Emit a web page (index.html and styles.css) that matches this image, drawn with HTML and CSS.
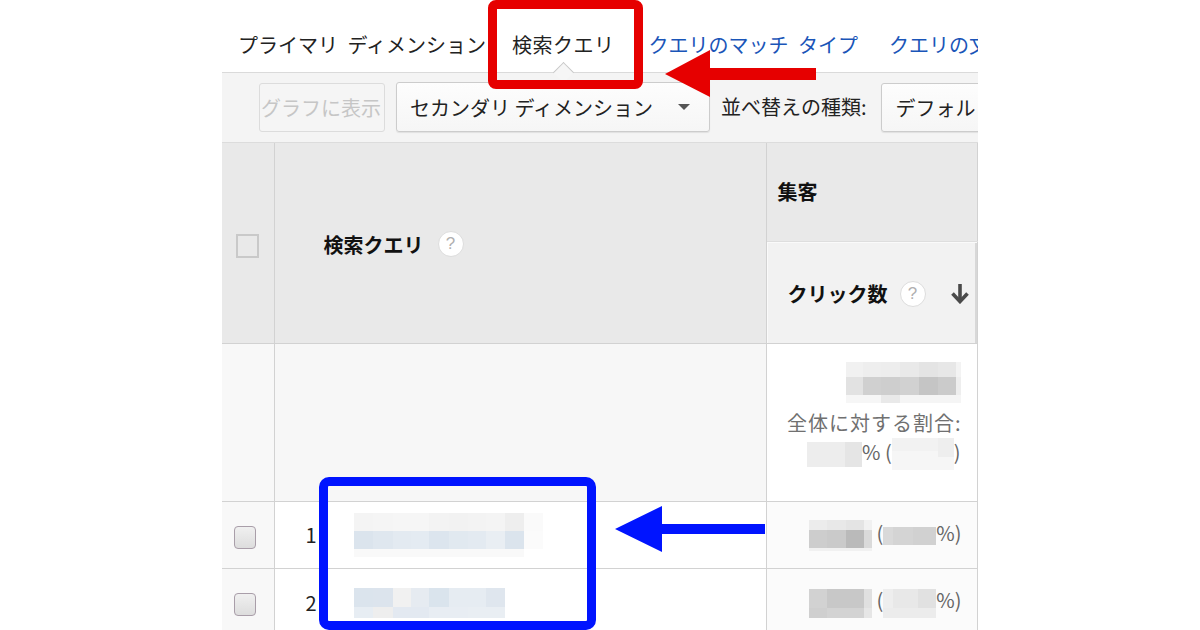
FILE: index.html
```html
<!DOCTYPE html>
<html lang="ja">
<head>
<meta charset="utf-8">
<title>検索クエリ</title>
<link rel="stylesheet" href="styles.css">
</head>
<body>
<div class="stage">
  <div class="shot">
    <nav class="tabs">
      <span class="tab-label">プライマリ ディメンション</span>
      <span class="tab active">検索クエリ</span>
      <a class="tab link">クエリのマッチ タイプ</a>
      <a class="tab link last">クエリの文字数</a>
    </nav>
    <div class="toolbar">
      <button class="btn btn-disabled">グラフに表示</button>
      <button class="btn btn-select"><span>セカンダリ ディメンション</span><span class="tri"></span></button>
      <span class="sort-label">並べ替えの種類:</span>
      <button class="btn btn-sort">デフォルト</button>
    </div>
    <table class="grid">
      <colgroup><col class="c-check"><col class="c-dim"><col class="c-metric"></colgroup>
      <thead>
        <tr class="h1">
          <th rowspan="2" class="th-check"><span class="cb-head"></span></th>
          <th rowspan="2" class="th-dim"><span class="th-text">検索クエリ</span><span class="help">?</span></th>
          <th class="th-group">集客</th>
        </tr>
        <tr class="h2">
          <th class="th-sorted"><span class="th-text">クリック数</span><span class="help">?</span><svg class="sort-arrow" width="20" height="21" viewBox="0 0 20 21"><path d="M10 1V18" stroke="#4a4a4a" stroke-width="3.6" fill="none"/><path d="M2.5 10.5L10 18.5L17.5 10.5" stroke="#4a4a4a" stroke-width="3.6" fill="none"/></svg></th>
        </tr>
      </thead>
      <tbody>
        <tr class="total">
          <td class="td-check"></td>
          <td class="td-dim"></td>
          <td class="td-metric">
            <svg class="blur blk" width="115" height="41" shape-rendering="crispEdges"><rect x="0" y="0" width="17" height="15" fill="#f1f1f1"/><rect x="17" y="0" width="18" height="15" fill="#eeeeee"/><rect x="35" y="0" width="19" height="15" fill="#ededed"/><rect x="54" y="0" width="19" height="15" fill="#e9e9e9"/><rect x="73" y="0" width="19" height="15" fill="#e4e4e4"/><rect x="92" y="0" width="18" height="15" fill="#e7e7e7"/><rect x="110" y="0" width="5" height="15" fill="#f3f3f3"/><rect x="0" y="15" width="17" height="18" fill="#e2e2e2"/><rect x="17" y="15" width="18" height="18" fill="#d0d0d0"/><rect x="35" y="15" width="19" height="18" fill="#cecece"/><rect x="54" y="15" width="19" height="18" fill="#d1d1d1"/><rect x="73" y="15" width="19" height="18" fill="#c5c5c5"/><rect x="92" y="15" width="18" height="18" fill="#cbcbcb"/><rect x="110" y="15" width="5" height="18" fill="#eeeeee"/><rect x="0" y="33" width="35" height="8" fill="#f6f6f6"/><rect x="35" y="33" width="19" height="8" fill="#e9e9e9"/><rect x="54" y="33" width="61" height="8" fill="#f5f5f5"/></svg>
            <div class="share">全体に対する割合:</div>
            <div class="share-line"><svg class="blur" width="55" height="25" shape-rendering="crispEdges"><rect x="0" y="0" width="38" height="25" fill="#ededed"/><rect x="38" y="0" width="17" height="25" fill="#e5e5e5"/></svg>% (<svg class="blur" width="62" height="32" shape-rendering="crispEdges"><rect x="0" y="0" width="62" height="13" fill="#f2f2f2"/><rect x="0" y="13" width="62" height="19" fill="#f6f6f6"/><rect x="46" y="0" width="16" height="19" fill="#eeeeee"/></svg>)</div>
          </td>
        </tr>
        <tr class="row">
          <td class="td-check"><span class="cb"></span></td>
          <td class="td-dim"><span class="idx">1</span><svg class="blur" width="189" height="44" shape-rendering="crispEdges"><rect x="0" y="0" width="19" height="18" fill="#f4f4f4"/><rect x="19" y="0" width="20" height="18" fill="#f5f5f5"/><rect x="39" y="0" width="18" height="18" fill="#f6f6f6"/><rect x="57" y="0" width="18" height="18" fill="#f6f6f6"/><rect x="75" y="0" width="20" height="18" fill="#f3f3f3"/><rect x="95" y="0" width="19" height="18" fill="#f2f2f2"/><rect x="114" y="0" width="18" height="18" fill="#f3f3f3"/><rect x="132" y="0" width="19" height="18" fill="#f4f4f4"/><rect x="151" y="0" width="19" height="18" fill="#eeeeee"/><rect x="170" y="0" width="19" height="18" fill="#fafafa"/><rect x="0" y="18" width="19" height="18" fill="#dbe4ed"/><rect x="19" y="18" width="20" height="18" fill="#dfe7ef"/><rect x="39" y="18" width="18" height="18" fill="#e3eaf1"/><rect x="57" y="18" width="18" height="18" fill="#e4ebf2"/><rect x="75" y="18" width="20" height="18" fill="#dce5ee"/><rect x="95" y="18" width="19" height="18" fill="#e1e9f0"/><rect x="114" y="18" width="18" height="18" fill="#e3eaf1"/><rect x="132" y="18" width="19" height="18" fill="#e9eef3"/><rect x="151" y="18" width="19" height="18" fill="#dbe4ed"/><rect x="170" y="18" width="19" height="18" fill="#fbfbfb"/><rect x="0" y="36" width="170" height="8" fill="#f9f9f9"/></svg></td>
          <td class="td-metric"><svg class="blur" width="63" height="31" shape-rendering="crispEdges"><rect x="0" y="0" width="18" height="10" fill="#ececec"/><rect x="18" y="0" width="19" height="10" fill="#e8e8e8"/><rect x="37" y="0" width="18" height="10" fill="#e4e4e4"/><rect x="55" y="0" width="8" height="10" fill="#f1f1f1"/><rect x="0" y="10" width="18" height="18" fill="#cdcdcd"/><rect x="18" y="10" width="19" height="18" fill="#cacaca"/><rect x="37" y="10" width="18" height="18" fill="#bababa"/><rect x="55" y="10" width="8" height="18" fill="#dadada"/><rect x="0" y="28" width="63" height="3" fill="#f1f1f1"/></svg> (<svg class="blur" width="53" height="18" shape-rendering="crispEdges"><rect x="0" y="0" width="10" height="18" fill="#d9d9d9"/><rect x="10" y="0" width="20" height="18" fill="#d4d4d4"/><rect x="30" y="0" width="23" height="18" fill="#d1d1d1"/></svg>%)</td>
        </tr>
        <tr class="row">
          <td class="td-check"><span class="cb"></span></td>
          <td class="td-dim"><span class="idx">2</span><svg class="blur" width="151" height="30" shape-rendering="crispEdges"><rect x="0" y="0" width="19" height="19" fill="#dbe4ed"/><rect x="19" y="0" width="20" height="19" fill="#dce4ed"/><rect x="39" y="0" width="18" height="19" fill="#f1f1f1"/><rect x="57" y="0" width="18" height="19" fill="#e6ebf1"/><rect x="75" y="0" width="20" height="19" fill="#dae4ed"/><rect x="95" y="0" width="19" height="19" fill="#e6ecf2"/><rect x="114" y="0" width="18" height="19" fill="#e6ecf2"/><rect x="132" y="0" width="19" height="19" fill="#dfe6ee"/><rect x="0" y="19" width="19" height="11" fill="#e7edf3"/><rect x="19" y="19" width="20" height="11" fill="#eeeeee"/><rect x="39" y="19" width="36" height="11" fill="#e3e9f1"/><rect x="75" y="19" width="39" height="11" fill="#e8edf3"/><rect x="114" y="19" width="37" height="11" fill="#e9eef3"/></svg></td>
          <td class="td-metric"><svg class="blur" width="63" height="29" shape-rendering="crispEdges"><rect x="0" y="0" width="18" height="19" fill="#d2d2d2"/><rect x="18" y="0" width="37" height="19" fill="#c8c8c8"/><rect x="55" y="0" width="8" height="19" fill="#e0e0e0"/><rect x="0" y="19" width="18" height="10" fill="#cfcfcf"/><rect x="18" y="19" width="37" height="10" fill="#d3d3d3"/><rect x="55" y="19" width="8" height="10" fill="#e6e6e6"/></svg> (<svg class="blur" width="53" height="29" shape-rendering="crispEdges"><rect x="0" y="0" width="10" height="19" fill="#eeeeee"/><rect x="10" y="0" width="25" height="19" fill="#e8e8e8"/><rect x="35" y="0" width="18" height="19" fill="#e1e1e1"/><rect x="0" y="19" width="53" height="10" fill="#ececec"/></svg>%)</td>
        </tr>
      </tbody>
    </table>
  </div>

  <div class="mark mark-red"></div>
  <svg class="arrow arrow-red" width="152" height="49" viewBox="0 0 152 49"><polygon points="0,24 45,0 45,18 151,18 151,30 45,30 45,47" fill="#e60000"/></svg>
  <div class="mark mark-blue"></div>
  <svg class="arrow arrow-blue" width="151" height="47" viewBox="0 0 151 47"><polygon points="0,23 47,0 47,18 150,18 150,28 47,28 47,46" fill="#0014ff"/></svg>
</div>
</body>
</html>
```

FILE: styles.css
```css
* { box-sizing: border-box; margin: 0; padding: 0; }

body {
  margin: 0;
  background: #ffffff;
  font-family: "Noto Sans CJK JP", "Noto Sans", sans-serif;
  color: #222222;
}

.stage {
  position: relative;
  width: 1200px;
  height: 630px;
  overflow: hidden;
  background: #ffffff;
}

.shot {
  margin-left: 222px;
  width: 756px;
  height: 630px;
  overflow: hidden;
  font-size: 20px;
}

/* ---------- tabs ---------- */
.tabs {
  height: 73px;
  border-bottom: 1px solid #dadada;
  display: flex;
  align-items: flex-start;
  padding: 28px 0 0 16px;
  white-space: nowrap;
  line-height: 34px;
  word-spacing: 5px;
  background: #ffffff;
}

.tabs > * { flex-shrink: 0; }

.tab-label { color: #222222; }

.tab {
  position: relative;
  color: #222222;
}

.tab.active {
  margin-left: 26px;
  letter-spacing: 0.5px;
}

.tab.active::after {
  content: "";
  position: absolute;
  left: 44px;
  top: 37px;
  width: 14px;
  height: 14px;
  background: #f6f6f6;
  border-top: 1px solid #c8c8c8;
  border-left: 1px solid #c8c8c8;
  transform: rotate(45deg);
}

.tab.link {
  color: #1a55b8;
  margin-left: 34px;
}

.tab.link.last { margin-left: 31px; }

/* ---------- toolbar ---------- */
.toolbar {
  height: 70px;
  background: #f4f4f4;
  border-bottom: 1px solid #dcdcdc;
  display: flex;
  align-items: flex-start;
  padding: 9px 0 0 37px;
  white-space: nowrap;
  word-spacing: 5px;
}

.toolbar > * { flex-shrink: 0; }

.btn {
  font: inherit;
  font-size: 20px;
  height: 50px;
  border: 1px solid #cccccc;
  border-radius: 3px;
  background: linear-gradient(#fdfdfd, #f6f6f6);
  color: #222222;
  display: flex;
  align-items: center;
  box-shadow: 0 1px 1px rgba(0, 0, 0, 0.08);
}

.btn-disabled {
  width: 126px;
  margin-top: 1px;
  height: 49px;
  padding: 0 0 0 1px;
  color: #c6c6c6;
  border-color: #dcdcdc;
  background: #f5f5f5;
  box-shadow: none;
}

.btn-select {
  margin-left: 11px;
  width: 314px;
  padding: 0 0 0 13px;
}

.tri {
  margin-left: 25px;
  width: 0;
  height: 0;
  border-left: 6px solid transparent;
  border-right: 6px solid transparent;
  border-top: 6px solid #555555;
}

.sort-label {
  margin-left: 11px;
  line-height: 50px;
  color: #222222;
}

.btn-sort {
  margin-left: 14px;
  margin-top: 1px;
  height: 49px;
  width: 160px;
  padding: 0 0 0 14px;
}

/* ---------- table ---------- */
.grid {
  width: 755px;
  table-layout: fixed;
  border-collapse: collapse;
  white-space: nowrap;
}

.c-check { width: 52px; }
.c-dim { width: 492px; }
.c-metric { width: 211px; }

.grid th,
.grid td {
  border: 1px solid #d2d2d2;
  padding: 0;
}

.grid thead tr:first-child th { border-top: none; }
.grid th:first-child,
.grid td:first-child { border-left: none; }

.grid th {
  background: #e9e9e9;
  font-weight: 700;
  text-align: left;
  color: #111111;
}

.h1 { height: 98px; }
.h2 { height: 102px; }
.total { height: 158px; }
.row { height: 67px; }

.th-check { text-align: center !important; vertical-align: middle; }

.cb-head {
  display: inline-block;
  width: 23px;
  height: 24px;
  border: 2px solid #c9c9c9;
  vertical-align: middle;
}

.th-dim {
  padding-left: 49px !important;
  vertical-align: middle;
}

.th-text { vertical-align: middle; }

.help {
  display: inline-flex;
  align-items: center;
  justify-content: center;
  width: 26px;
  height: 26px;
  margin-left: 14px;
  border-radius: 50%;
  border: 1px solid #dddddd;
  background: #ffffff;
  color: #b0b0b0;
  font-family: "Liberation Sans", sans-serif;
  font-weight: 400;
  font-size: 17px;
  vertical-align: middle;
}

.th-group {
  padding-left: 11px !important;
  vertical-align: middle;
  border-bottom-color: #dedede !important;
}

.th-sorted {
  background: #f2f2f2 !important;
  padding-left: 21px !important;
  vertical-align: middle;
  box-shadow: inset 1px 1px 0 #fafafa, inset -2px 0 0 #d8d8d8;
}

.th-sorted .help { margin-left: 12px; }

.sort-arrow {
  margin-left: 24px;
  vertical-align: middle;
}

.td-check {
  background: #f8f8f8;
  vertical-align: middle;
  padding-left: 12px !important;
}

.td-dim {
  background: #ffffff;
  vertical-align: middle;
  padding-left: 31px !important;
}

.total .td-dim { background: #f7f7f7; }

.td-metric {
  background: #fbfbfb;
  text-align: right;
  vertical-align: middle;
  padding-right: 15px !important;
  color: #666666;
  font-size: 20px;
}

.total .td-metric {
  background: #ffffff;
  vertical-align: top;
  padding-top: 18px !important;
  padding-right: 16px !important;
}

.blur { vertical-align: middle; }

.blk {
  display: block;
  margin-left: auto;
}

.share {
  margin-top: 6px;
  line-height: 28px;
  letter-spacing: 1px;
  margin-right: -1px;
  color: #707070;
}

.share-line {
  line-height: 30px;
  color: #666666;
}

.cb {
  display: inline-block;
  width: 22px;
  height: 23px;
  border: 1px solid #a99ea9;
  border-radius: 4px;
  background: linear-gradient(#f0f0f0, #dddddd);
  vertical-align: middle;
}

.idx {
  display: inline-block;
  width: 48px;
  color: #222222;
  vertical-align: middle;
}

/* ---------- annotations ---------- */
.mark {
  position: absolute;
  border-style: solid;
  border-width: 9px;
}

.mark-red {
  left: 488px;
  top: 0;
  width: 155px;
  height: 89px;
  border-color: #e60000;
  border-radius: 8px;
}

.mark-blue {
  left: 319px;
  top: 477px;
  width: 277px;
  height: 153px;
  border-color: #0014ff;
  border-radius: 10px;
}

.arrow { position: absolute; }

.arrow-red {
  left: 665px;
  top: 50px;
}

.arrow-blue {
  left: 615px;
  top: 506px;
}
```
